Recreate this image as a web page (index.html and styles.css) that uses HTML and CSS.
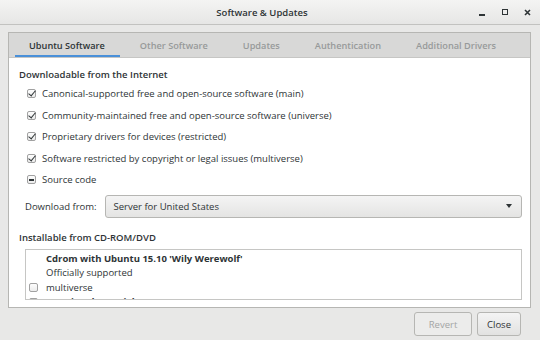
FILE: index.html
```html
<!DOCTYPE html>
<html lang="en">
<head>
    <meta charset="UTF-8">
    <title>Software &amp; Updates</title>
    <link rel="stylesheet" href="styles.css">
</head>
<body>
    <div class="window">
        <div class="titlebar">
            <div class="title">Software &amp; Updates</div>
            <div class="controls">
                <span class="ctl ctl-min"></span>
                <span class="ctl ctl-max"></span>
                <span class="ctl ctl-close">
                    <svg width="7" height="7" viewBox="0 0 7 7"><path d="M1 1L6 6M6 1L1 6" stroke="#2e3436" stroke-width="1.6"/></svg>
                </span>
            </div>
        </div>

        <div class="dialog">
            <div class="notebook">
                <div class="tabs">
                    <div class="tab active">Ubuntu Software</div>
                    <div class="tab">Other Software</div>
                    <div class="tab">Updates</div>
                    <div class="tab">Authentication</div>
                    <div class="tab">Additional Drivers</div>
                </div>
                <div class="page">
                    <div class="heading">Downloadable from the Internet</div>
                    <div class="checks">
                        <div class="check"><span class="box checked"></span>Canonical-supported free and open-source software (main)</div>
                        <div class="check"><span class="box checked"></span>Community-maintained free and open-source software (universe)</div>
                        <div class="check"><span class="box checked"></span>Proprietary drivers for devices (restricted)</div>
                        <div class="check"><span class="box checked"></span>Software restricted by copyright or legal issues (multiverse)</div>
                        <div class="check"><span class="box mixed"></span>Source code</div>
                    </div>
                    <div class="download-row">
                        <span class="label">Download from:</span>
                        <div class="combo">
                            <span>Server for United States</span>
                            <span class="arrow"></span>
                        </div>
                    </div>
                    <div class="heading">Installable from CD-ROM/DVD</div>
                    <div class="cd-list">
                        <div class="cd-item">
                            <span class="box"></span>
                            <div class="cd-text">
                                <div class="cd-name">Cdrom with Ubuntu 15.10 'Wily Werewolf'</div>
                                <div>Officially supported</div>
                                <div>multiverse</div>
                            </div>
                        </div>
                        <div class="cd-item">
                            <span class="box"></span>
                            <div class="cd-text">
                                <div class="cd-name">Restricted copyright</div>
                            </div>
                        </div>
                    </div>
                </div>
            </div>
            <div class="buttons">
                <button class="btn btn-revert" disabled>Revert</button>
                <button class="btn btn-close">Close</button>
            </div>
        </div>
    </div>
</body>
</html>
```

FILE: styles.css
```css
* {
    margin: 0;
    padding: 0;
    box-sizing: border-box;
}

body {
    background-color: #e8e8e7;
    font-family: 'Open Sans', sans-serif;
    font-size: 9.5px;
    color: #2e3436;
    width: 540px;
    height: 340px;
    overflow: hidden;
}

.titlebar {
    height: 25px;
    display: flex;
    align-items: center;
    background: linear-gradient(#f4f4f3, #e6e6e5);
    border-bottom: 1px solid #c2c2c0;
}

.titlebar .title {
    flex: 1;
    text-align: center;
    font-weight: 600;
    font-size: 9.5px;
    padding-left: 54px;
}

.titlebar .controls {
    display: flex;
    align-items: center;
    gap: 16px;
    padding-right: 9px;
    width: 70px;
    justify-content: flex-end;
}

.ctl {
    display: flex;
    align-items: center;
    justify-content: center;
    width: 7px;
    height: 7px;
}

.ctl-min {
    height: 2px;
    width: 6px;
    background-color: #2e3436;
    margin-top: 6px;
    margin-right: 1px;
}

.ctl-max {
    width: 6px;
    height: 6px;
    border: 1.5px solid #2e3436;
}

.dialog {
    padding: 7px 9px 0 8px;
}

.notebook {
    border: 1px solid #b6b6b3;
    height: 276px;
    background-color: #fff;
    display: flex;
    flex-direction: column;
}

.tabs {
    height: 25px;
    background-color: #d8d8d7;
    border-bottom: 1px solid #c6c6c4;
    display: flex;
    padding-left: 6px;
    gap: 6px;
}

.tab {
    padding: 0 15px 0 14px;
    display: flex;
    align-items: center;
    white-space: nowrap;
    color: #979a9a;
    font-weight: 600;
    font-size: 9.2px;
}

.tab.active {
    color: #2e3436;
    box-shadow: inset 0 -2px 0 #4a90d9;
}

.page {
    padding: 10px 8px 0 10px;
    flex: 1;
    overflow: hidden;
}

.heading {
    font-weight: 600;
    line-height: 14px;
}

.checks {
    padding-left: 8px;
    margin-top: 1px;
}

.check {
    display: flex;
    align-items: center;
    height: 21.5px;
    gap: 6px;
}

.box {
    width: 9px;
    height: 9px;
    border: 1px solid #a1a1a1;
    border-radius: 2px;
    background: linear-gradient(#fdfdfd, #ececec);
    flex-shrink: 0;
    position: relative;
}

.box.checked::after {
    content: "";
    position: absolute;
    left: 2px;
    top: -1px;
    width: 3px;
    height: 6px;
    border: solid #2e3436;
    border-width: 0 1.5px 1.5px 0;
    transform: rotate(40deg);
}

.box.mixed::after {
    content: "";
    position: absolute;
    left: 1px;
    top: 3px;
    width: 5px;
    height: 1.5px;
    background-color: #2e3436;
}

.download-row {
    display: flex;
    align-items: center;
    gap: 8px;
    padding-left: 6px;
    margin-top: 4px;
}

.combo {
    flex: 1;
    height: 23px;
    border: 1px solid #b6b6b3;
    border-radius: 3px;
    background: linear-gradient(#f4f4f4, #e4e4e3);
    display: flex;
    align-items: center;
    justify-content: space-between;
    padding: 0 9px 0 8px;
}

.combo .arrow {
    width: 0;
    height: 0;
    border-left: 3.5px solid transparent;
    border-right: 3.5px solid transparent;
    border-top: 4px solid #2e3436;
}

.download-row + .heading {
    margin-top: 13px;
}

.cd-list {
    margin: 4px 0 0 6px;
    border: 1px solid #c6c6c4;
    height: 51px;
    overflow: hidden;
    padding: 2px 3px 0 3px;
}

.cd-item {
    display: flex;
    align-items: flex-end;
    gap: 8px;
    line-height: 14.5px;
}

.cd-item .box {
    margin-bottom: 3px;
}

.cd-name {
    font-weight: 700;
}

.buttons {
    display: flex;
    justify-content: flex-end;
    gap: 5px;
    padding: 4px 10px 0 0;
}

.btn {
    height: 24px;
    font-family: 'Open Sans', sans-serif;
    font-size: 9.5px;
    color: #2e3436;
    border: 1px solid #b6b6b3;
    border-radius: 3px;
    background: linear-gradient(#f4f4f4, #e2e2e1);
}

.btn-close {
    width: 44px;
}

.btn-revert {
    width: 58px;
    color: #a3a5a5;
    background: #ececeb;
}
```
